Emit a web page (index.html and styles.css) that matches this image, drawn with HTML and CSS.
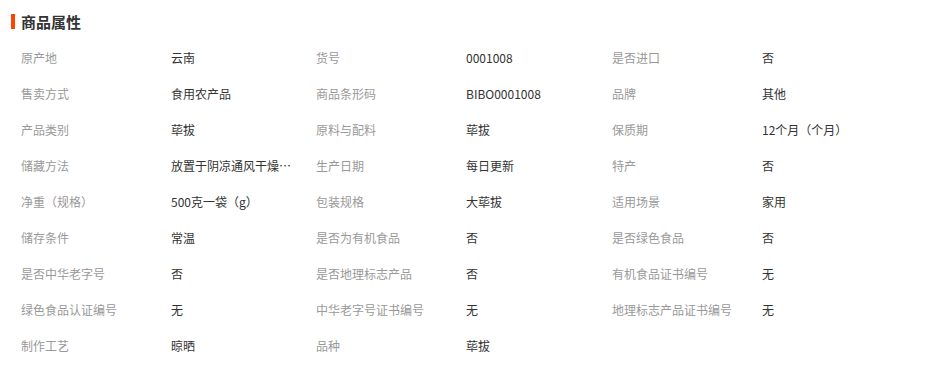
FILE: index.html
```html
<!DOCTYPE html>
<html lang="zh-CN">
<head>
<meta charset="utf-8">
<link rel="stylesheet" href="styles.css">
</head>
<body>
<div class="attrs">
  <h3 class="attrs-title">商品属性</h3>
  <div class="attrs-grid">
    <div class="item"><span class="label">原产地</span><span class="value">云南</span></div>
    <div class="item"><span class="label">货号</span><span class="value">0001008</span></div>
    <div class="item"><span class="label">是否进口</span><span class="value">否</span></div>
    <div class="item"><span class="label">售卖方式</span><span class="value">食用农产品</span></div>
    <div class="item"><span class="label">商品条形码</span><span class="value">BIBO0001008</span></div>
    <div class="item"><span class="label">品牌</span><span class="value">其他</span></div>
    <div class="item"><span class="label">产品类别</span><span class="value">荜拔</span></div>
    <div class="item"><span class="label">原料与配料</span><span class="value">荜拔</span></div>
    <div class="item"><span class="label">保质期</span><span class="value">12个月（个月）</span></div>
    <div class="item"><span class="label">储藏方法</span><span class="value" title="放置于阴凉通风干燥处保存">放置于阴凉通风干燥处保存</span></div>
    <div class="item"><span class="label">生产日期</span><span class="value">每日更新</span></div>
    <div class="item"><span class="label">特产</span><span class="value">否</span></div>
    <div class="item"><span class="label">净重（规格）</span><span class="value">500克一袋（g）</span></div>
    <div class="item"><span class="label">包装规格</span><span class="value">大荜拔</span></div>
    <div class="item"><span class="label">适用场景</span><span class="value">家用</span></div>
    <div class="item"><span class="label">储存条件</span><span class="value">常温</span></div>
    <div class="item"><span class="label">是否为有机食品</span><span class="value">否</span></div>
    <div class="item"><span class="label">是否绿色食品</span><span class="value">否</span></div>
    <div class="item"><span class="label">是否中华老字号</span><span class="value">否</span></div>
    <div class="item"><span class="label">是否地理标志产品</span><span class="value">否</span></div>
    <div class="item"><span class="label">有机食品证书编号</span><span class="value">无</span></div>
    <div class="item"><span class="label">绿色食品认证编号</span><span class="value">无</span></div>
    <div class="item"><span class="label">中华老字号证书编号</span><span class="value">无</span></div>
    <div class="item"><span class="label">地理标志产品证书编号</span><span class="value">无</span></div>
    <div class="item"><span class="label">制作工艺</span><span class="value">晾晒</span></div>
    <div class="item"><span class="label">品种</span><span class="value">荜拔</span></div>
  </div>
</div>
</body>
</html>
```
FILE: styles.css
```css
html, body {
  margin: 0;
  padding: 0;
  background: #fff;
}
body {
  font-family: "Noto Sans CJK SC", "Noto Sans", sans-serif;
  font-size: 12px;
  color: #333;
}
.attrs {
  padding: 14px 0 0 11px;
}
.attrs-title {
  margin: 0;
  border-left: 4px solid #ff4400;
  padding-left: 6px;
  font-size: 15px;
  font-weight: bold;
  line-height: 15px;
  height: 15px;
  color: #333;
}
.attrs-grid {
  margin-top: 11px;
  padding-left: 10px;
  display: grid;
  grid-template-columns: 295px 296px 296px;
}
.item {
  display: flex;
  height: 36px;
  line-height: 36px;
  white-space: nowrap;
}
.label {
  width: 150px;
  flex: none;
  color: #999;
}
.value {
  width: 122px;
  overflow: hidden;
  text-overflow: ellipsis;
  color: #333;
}
```
